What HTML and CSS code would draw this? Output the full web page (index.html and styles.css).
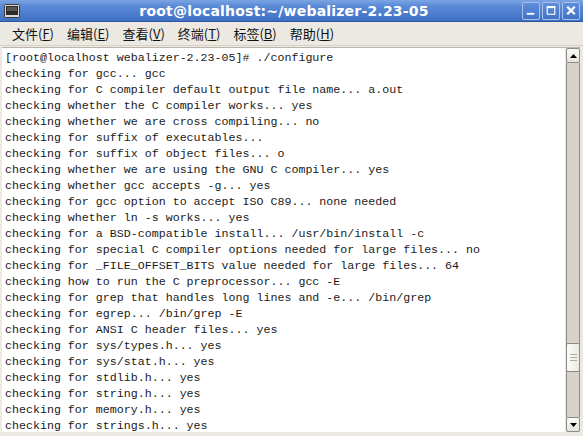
FILE: index.html
```html
<!DOCTYPE html>
<html lang="zh-CN">
<head>
  <meta charset="UTF-8" />
  <title>root@localhost:~/webalizer-2.23-05</title>
  <link rel="stylesheet" href="styles.css">
</head>
<body>
  <div class="window">
    <header class="titlebar">
      <svg class="app-icon" width="16" height="14" viewBox="0 0 16 14">
        <rect x="0.5" y="0.5" width="15" height="13" rx="1" fill="#d8d8d8" stroke="#3a3a3a"/>
        <rect x="2" y="2" width="12" height="9" fill="#2b2b2b"/>
        <rect x="3" y="3" width="10" height="4" fill="#555"/>
      </svg>
      <h1 class="title">root@localhost:~/webalizer-2.23-05</h1>
      <div class="win-buttons">
        <span class="win-btn"><svg width="17" height="17" viewBox="0 0 17 17"><rect x="4" y="11" width="8" height="2" fill="#fff"/></svg></span>
        <span class="win-btn"><svg width="17" height="17" viewBox="0 0 17 17"><rect x="4.5" y="4.5" width="8" height="8" fill="none" stroke="#fff" stroke-width="1.2"/><rect x="4" y="4" width="9" height="2" fill="#fff"/></svg></span>
        <span class="win-btn"><svg width="17" height="17" viewBox="0 0 17 17"><path d="M4.5 4.5 L12.5 12.5 M12.5 4.5 L4.5 12.5" stroke="#fff" stroke-width="2.4"/></svg></span>
      </div>
    </header>

    <nav class="menubar">
      <span class="menu-item">文件(<u>F</u>)</span>
      <span class="menu-item">编辑(<u>E</u>)</span>
      <span class="menu-item">查看(<u>V</u>)</span>
      <span class="menu-item">终端(<u>T</u>)</span>
      <span class="menu-item">标签(<u>B</u>)</span>
      <span class="menu-item">帮助(<u>H</u>)</span>
    </nav>

    <main class="terminal">
      <pre class="output">[root@localhost webalizer-2.23-05]# ./configure
checking for gcc... gcc
checking for C compiler default output file name... a.out
checking whether the C compiler works... yes
checking whether we are cross compiling... no
checking for suffix of executables...
checking for suffix of object files... o
checking whether we are using the GNU C compiler... yes
checking whether gcc accepts -g... yes
checking for gcc option to accept ISO C89... none needed
checking whether ln -s works... yes
checking for a BSD-compatible install... /usr/bin/install -c
checking for special C compiler options needed for large files... no
checking for _FILE_OFFSET_BITS value needed for large files... 64
checking how to run the C preprocessor... gcc -E
checking for grep that handles long lines and -e... /bin/grep
checking for egrep... /bin/grep -E
checking for ANSI C header files... yes
checking for sys/types.h... yes
checking for sys/stat.h... yes
checking for stdlib.h... yes
checking for string.h... yes
checking for memory.h... yes
checking for strings.h... yes</pre>
      <div class="scrollbar">
        <div class="sb-btn"><svg width="7" height="4" viewBox="0 0 7 4"><path d="M0 4 L3.5 0 L7 4 Z" fill="#000"/></svg></div>
        <div class="sb-track">
          <div class="sb-thumb"><i></i><i></i><i></i></div>
        </div>
        <div class="sb-btn"><svg width="7" height="4" viewBox="0 0 7 4"><path d="M0 0 L7 0 L3.5 4 Z" fill="#000"/></svg></div>
      </div>
    </main>
  </div>
</body>
</html>
```

FILE: styles.css
```css
* {
  box-sizing: border-box;
  margin: 0;
  padding: 0;
}

body {
  width: 583px;
  height: 436px;
  overflow: hidden;
  background: #ece9e2;
  font-family: "Noto Sans CJK SC", "DejaVu Sans", sans-serif;
}

.window {
  height: 436px;
  display: flex;
  flex-direction: column;
  background: #ece9e2;
}

.titlebar {
  height: 22px;
  display: flex;
  align-items: center;
  padding: 0 3px 0 4px;
  background: linear-gradient(#7ba4e2 0%, #5a8ad6 30%, #3f6fc4 100%);
  border-bottom: 1px solid #2d55a0;
}

.app-icon {
  flex: none;
}

.title {
  flex: 1;
  text-align: center;
  color: #fff;
  font-family: "DejaVu Sans", sans-serif;
  font-weight: bold;
  font-size: 14px;
  letter-spacing: 0.2px;
  padding-left: 26px;
}

.win-buttons {
  display: flex;
  gap: 2px;
}

.win-btn {
  width: 18px;
  height: 18px;
  display: flex;
  align-items: center;
  justify-content: center;
  border: 1px solid #a9c3ec;
  border-radius: 2px;
  background: linear-gradient(#5f8fd9, #4373c6);
}

.menubar {
  height: 24px;
  display: flex;
  align-items: center;
  padding-left: 12px;
  gap: 13px;
  font-size: 13px;
  color: #111;
  border-bottom: 1px solid #d6d2c8;
}

.menu-item u {
  text-decoration: underline;
  text-underline-offset: 1px;
}

.terminal {
  flex: 1;
  display: flex;
  margin: 1px 3px 4px 2px;
  border-top: 1px solid #b8b4ac;
  background: #fff;
  min-height: 0;
}

.output {
  flex: 1;
  padding: 2px 0 0 3px;
  font-family: "Liberation Mono", monospace;
  font-size: 11.65px;
  line-height: 16px;
  color: #1a1a1a;
  overflow: hidden;
}

.scrollbar {
  width: 15px;
  display: flex;
  flex-direction: column;
  background: #d8d3c9;
  border-left: 1px solid #ece9e2;
}

.sb-btn {
  height: 15px;
  display: flex;
  align-items: center;
  justify-content: center;
  background: linear-gradient(#fbfaf8, #e8e5df);
  border: 1px solid #8c8a85;
  border-radius: 2px;
}

.sb-track {
  flex: 1;
  position: relative;
  border-left: 1px solid #8c8a85;
  border-right: 1px solid #8c8a85;
}

.sb-thumb {
  position: absolute;
  left: -1px;
  right: -1px;
  top: 280px;
  height: 29px;
  display: flex;
  flex-direction: column;
  align-items: center;
  justify-content: center;
  gap: 2px;
  background: linear-gradient(90deg, #fdfcfa, #ece9e3);
  border: 1px solid #8c8a85;
  border-radius: 2px;
}

.sb-thumb i {
  display: block;
  width: 7px;
  height: 1px;
  background: #b0aca5;
}
```
